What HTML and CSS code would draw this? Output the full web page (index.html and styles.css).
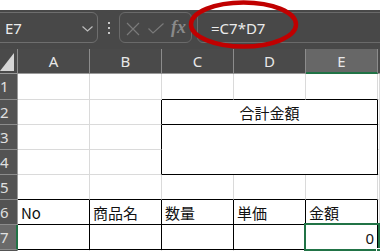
FILE: index.html
```html
<!DOCTYPE html>
<html lang="ja">
<head>
<meta charset="utf-8">
<link rel="stylesheet" href="styles.css">
</head>
<body>
<div class="app">
  <div class="topstrip"></div>
  <div class="toolbar">
    <div class="namebox">
      <span class="name">E7</span>
      <svg class="chev" width="11" height="6" viewBox="0 0 11 6"><path d="M0.5 0.5 L5.5 5 L10.5 0.5" fill="none" stroke="#bdbdbd" stroke-width="1.2"/></svg>
    </div>
    <div class="dots"><i></i><i></i><i></i></div>
    <div class="fxbox">
      <svg width="14" height="14" viewBox="0 0 14 14"><path d="M1 1 L13 13 M13 1 L1 13" stroke="#7a7a7a" stroke-width="1.2" fill="none"/></svg>
      <svg width="16" height="11" viewBox="0 0 16 11"><path d="M0.5 5.5 L5 10 L15.5 0.5" stroke="#7a7a7a" stroke-width="1.2" fill="none"/></svg>
      <span class="fx">fx</span>
    </div>
    <div class="formula">=C7*D7</div>
  </div>
  <div class="grid">
    <div class="corner"><svg width="15" height="18" viewBox="0 0 15 18"><path d="M14 0 L14 18 L0 18 Z" fill="#d6d6d6"/></svg></div>
    <div class="ch">A</div>
    <div class="ch">B</div>
    <div class="ch">C</div>
    <div class="ch">D</div>
    <div class="ch sel">E</div>
    <div class="ch fill"></div>

    <div class="rh">1</div>
    <div class="c"></div><div class="c"></div><div class="c bb"></div><div class="c bb"></div><div class="c bb"></div><div class="c"></div>

    <div class="rh">2</div>
    <div class="c"></div><div class="c br"></div>
    <div class="c merge1 br bb">合計金額</div>
    <div class="c"></div>

    <div class="rh">3</div>
    <div class="c"></div><div class="c br"></div>
    <div class="c merge2 br bb"></div>
    <div class="c"></div>

    <div class="rh">4</div>
    <div class="c"></div><div class="c br"></div>
    <div class="c"></div>

    <div class="rh">5</div>
    <div class="c bb"></div><div class="c bb"></div><div class="c bb"></div><div class="c bb"></div><div class="c bb"></div><div class="c"></div>

    <div class="rh">6</div>
    <div class="c br bb t">No</div><div class="c br bb t">商品名</div><div class="c br bb t">数量</div><div class="c br bb t">単価</div><div class="c br bb t">金額</div><div class="c"></div>

    <div class="rh selrow">7</div>
    <div class="c br bb"></div><div class="c br bb"></div><div class="c br bb"></div><div class="c br bb"></div><div class="c br bb active"><span class="num">0</span><span class="handle"></span></div><div class="c"></div>

    <div class="rh"></div>
    <div class="c"></div><div class="c"></div><div class="c"></div><div class="c"></div><div class="c"></div><div class="c"></div>
  </div>
  <svg class="ring" width="380" height="60" viewBox="0 0 380 60"><ellipse cx="243.5" cy="24.5" rx="52.5" ry="22" fill="none" stroke="#c00000" stroke-width="4.5"/></svg>
</div>
</body>
</html>
```
FILE: styles.css
```css
* { box-sizing: border-box; }
html, body { margin: 0; padding: 0; background: #fff; }
body { width: 380px; height: 251px; overflow: hidden; font-family: "Noto Sans", "Noto Sans CJK JP", sans-serif; }
.app { position: relative; width: 380px; height: 251px; overflow: hidden; }
.topstrip { height: 10px; background: #fff; }
.toolbar {
  height: 39px; background: #484848;
  display: flex; align-items: flex-start; padding-top: 2px;
}
.toolbar > * { flex-shrink: 0; }
.namebox {
  margin-left: -6px; width: 104px; height: 31px;
  border: 1px solid #6e6e6e; border-radius: 6px;
  display: flex; align-items: center; justify-content: space-between;
  padding: 0 4px 0 10px; color: #ececec; font-size: 15px;
}
.name { line-height: 1; padding-top: 1px; }
.chev { margin-top: 2px; }
.dots { width: 21px; height: 31px; display: flex; flex-direction: column; align-items: center; justify-content: center; gap: 3px; }
.dots i { display: block; width: 2px; height: 2px; background: #c8c8c8; }
.fxbox {
  width: 73px; height: 31px; border: 1px solid #6a6a6a; border-radius: 6px;
  display: flex; align-items: center; padding-left: 6px; gap: 8px;
}
.fxbox svg:first-child { margin-top: 2px; }
.fxbox svg:nth-child(2) { margin-top: 1px; }
.fx { font-family: "Liberation Serif", serif; font-style: italic; font-weight: bold; color: #8a8a8a; font-size: 18px; margin-left: -1px; }
.formula {
  margin-left: 5px; width: 200px; height: 31px; border: 1px solid #6a6a6a; border-radius: 6px;
  color: #ececec; font-size: 15px; padding-left: 13px; display: flex; align-items: center;
}
.grid {
  display: grid;
  grid-template-columns: 18px repeat(5, 72px) 2px;
  grid-template-rows: 25px 26px repeat(7, 25px);
}
.corner { background: #4a4a4a; border-right: 1px solid #8c8c8c; border-bottom: 1px solid #9a9a9a; display: flex; align-items: flex-end; padding-bottom: 2px; }
.ch {
  background: #4a4a4a; color: #e8e8e8; font-size: 15px;
  border-right: 1px solid #8c8c8c; border-bottom: 1px solid #9a9a9a;
  display: flex; align-items: center; justify-content: center; line-height: 1;
}
.ch.sel { background: #676767; border-bottom: 2px solid #217346; padding-top: 1px; }
.ch.fill { border-right: none; }
.rh {
  background: #535353; color: #e0e0e0; font-size: 15px; line-height: 1;
  border-right: 1px solid #9a9a9a; border-bottom: 1px solid #8c8c8c;
  display: flex; align-items: center; padding-left: 0px;
}
.rh.selrow { background: #6a6a6a; border-right: 2px solid #217346; }
.c { border-right: 1px solid #dadada; border-bottom: 1px solid #dadada; background: #fff; font-size: 15px; color: #111; font-family: "Noto Sans CJK JP", sans-serif; }
.c.br { border-right-color: #000; }
.c.bb { border-bottom-color: #000; }
.merge1 { grid-column: span 3; display: flex; align-items: flex-end; justify-content: center; padding-bottom: 2px; line-height: 1.2; }
.merge2 { grid-column: span 3; grid-row: span 2; }
.t { display: flex; align-items: flex-end; padding-left: 3px; padding-bottom: 2px; line-height: 1.2; }
.t:first-child { font-family: "Noto Sans", sans-serif; }
.active { position: relative; display: flex; align-items: flex-end; justify-content: flex-end; padding-right: 3px; padding-bottom: 2px; line-height: 1.2; font-family: "Noto Sans", sans-serif; }
.active::before { content: ""; position: absolute; left: -2px; top: -2px; right: -3px; bottom: -2px; border: 2px solid #217346; }
.handle { position: absolute; right: -4px; bottom: -4px; width: 5px; height: 5px; background: #217346; border: 1px solid #fff; }
.ring { position: absolute; left: 0; top: 0; }
```
